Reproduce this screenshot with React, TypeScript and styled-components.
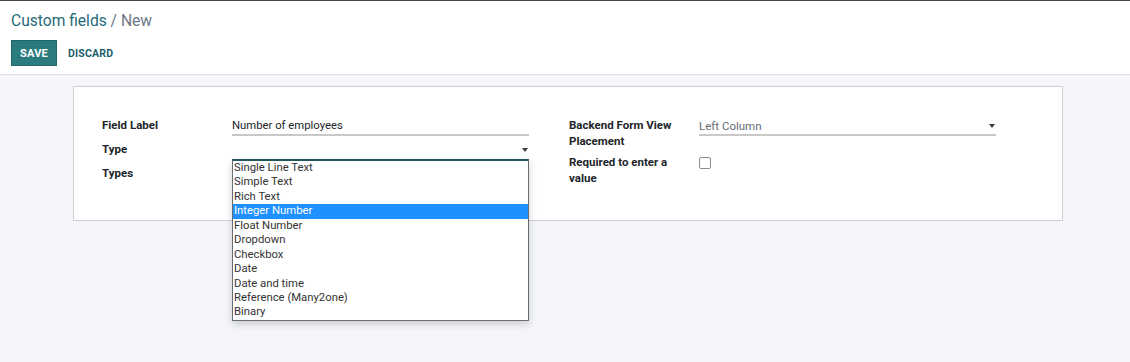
import styled, { createGlobalStyle } from "styled-components";

const GlobalStyle = createGlobalStyle`
  html, body {
    margin: 0;
    padding: 0;
    background: #f5f6fa;
    font-family: Roboto, "Noto Sans", sans-serif;
    color: #212529;
  }
`;

const Page = styled.div`
  width: 1130px;
  height: 362px;
  border-top: 1px solid #4b3f49;
  box-sizing: border-box;
  overflow: hidden;
`;

const ControlPanel = styled.div`
  background: #fff;
  border-bottom: 1px solid #dcdde3;
  padding: 10px 11px 8px;
  height: 74px;
  box-sizing: border-box;
`;

const Breadcrumb = styled.div`
  font-size: 15.6px;
  line-height: 20px;
  color: #1f6a78;
`;

const Current = styled.span`
  color: #6c7887;
`;

const Buttons = styled.div`
  display: flex;
  align-items: center;
  gap: 10px;
  margin-top: 9px;
`;

const Button = styled.button<{ $primary?: boolean }>`
  font-family: Roboto, "Noto Sans", sans-serif;
  font-size: ${(p) => (p.$primary ? "11px" : "10.5px")};
  font-weight: 700;
  letter-spacing: 0.2px;
  height: 26px;
  padding: 0 ${(p) => (p.$primary ? "8px" : "1px")};
  border: ${(p) => (p.$primary ? "1px solid #1f6768" : "none")};
  background: ${(p) => (p.$primary ? "#2b7b7e" : "transparent")};
  color: ${(p) => (p.$primary ? "#fff" : "#1d5e6f")};
  cursor: pointer;
`;

const Sheet = styled.div`
  position: relative;
  margin: 11px 0 0 73px;
  width: 990px;
  height: 135px;
  box-sizing: border-box;
  background: #fff;
  border: 1px solid #cfd0d6;
  padding: 29px 0 0 28px;
  display: flex;
  gap: 40px;
`;

const Group = styled.div`
  display: grid;
  grid-template-columns: 130px 297px;
  align-content: start;
`;

const Label = styled.div<{ $h?: number }>`
  font-size: 11.5px;
  font-weight: 700;
  line-height: 16px;
  padding-top: 1px;
  height: ${(p) => p.$h ?? 24}px;
  box-sizing: border-box;
`;

const Field = styled.div<{ $h?: number }>`
  position: relative;
  height: ${(p) => p.$h ?? 24}px;
`;

const Input = styled.div<{ $muted?: boolean; $line?: boolean }>`
  font-size: ${(p) => (p.$muted ? "11.5px" : "11.3px")};
  line-height: 16px;
  padding-top: 1px;
  height: 17px;
  color: ${(p) => (p.$muted ? "#666b73" : "#212529")};
  border-bottom: ${(p) => (p.$line ? "2px solid #c8c8c8" : "none")};
  display: flex;
  justify-content: space-between;
  align-items: center;
`;

const Caret = styled.span`
  width: 0;
  height: 0;
  border-left: 3.5px solid transparent;
  border-right: 3.5px solid transparent;
  border-top: 4px solid #3b3f45;
  margin-right: 1px;
`;

const Checkbox = styled.span`
  display: block;
  width: 10px;
  height: 10px;
  margin-top: 4px;
  border: 1px solid #8a8d93;
  border-radius: 2px;
  background: #fff;
`;

const List = styled.ul`
  position: absolute;
  top: 19px;
  left: 0;
  width: 297px;
  margin: 0;
  padding: 0;
  list-style: none;
  background: #fff;
  border: 1px solid #6a6d72;
  border-top: 2px solid #23565a;
  box-sizing: border-box;
  box-shadow: 0 3px 8px rgba(0, 0, 0, 0.18);
  z-index: 2;
`;

const Option = styled.li<{ $active?: boolean }>`
  font-size: 11.3px;
  line-height: 14.45px;
  height: 14.45px;
  padding-left: 1px;
  color: ${(p) => (p.$active ? "#fff" : "#333")};
  background: ${(p) => (p.$active ? "#1e90ff" : "transparent")};
  white-space: nowrap;
`;

const types = [
  "Single Line Text",
  "Simple Text",
  "Rich Text",
  "Integer Number",
  "Float Number",
  "Dropdown",
  "Checkbox",
  "Date",
  "Date and time",
  "Reference (Many2one)",
  "Binary",
];

export default function App() {
  return (
    <Page>
      <GlobalStyle />
      <ControlPanel>
        <Breadcrumb>
          Custom fields <Current>/ New</Current>
        </Breadcrumb>
        <Buttons>
          <Button $primary>SAVE</Button>
          <Button>DISCARD</Button>
        </Buttons>
      </ControlPanel>
      <Sheet>
        <Group>
          <Label>Field Label</Label>
          <Field>
            <Input $line>Number of employees</Input>
          </Field>
          <Label>Type</Label>
          <Field>
            <Input>
              <span />
              <Caret />
            </Input>
            <List>
              {types.map((t) => (
                <Option key={t} $active={t === "Integer Number"}>
                  {t}
                </Option>
              ))}
            </List>
          </Field>
          <Label>Types</Label>
          <Field />
        </Group>
        <Group>
          <Label $h={37}>
            Backend Form View
            <br />
            Placement
          </Label>
          <Field $h={37}>
            <Input $muted $line>
              Left Column
              <Caret />
            </Input>
          </Field>
          <Label $h={34}>
            Required to enter a
            <br />
            value
          </Label>
          <Field $h={34}>
            <Checkbox />
          </Field>
        </Group>
      </Sheet>
    </Page>
  );
}
